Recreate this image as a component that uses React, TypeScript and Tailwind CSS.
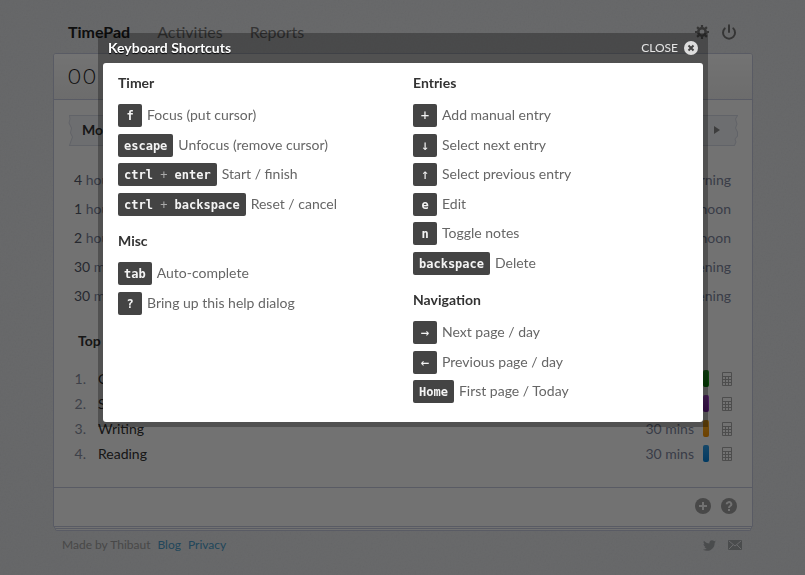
import { Power } from "lucide-react";
import { FaTwitter } from "react-icons/fa";

type Shortcut = { keys: string[]; label: string };
type Group = { title: string; items: Shortcut[] };

const left: Group[] = [
  {
    title: "Timer",
    items: [
      { keys: ["f"], label: "Focus (put cursor)" },
      { keys: ["escape"], label: "Unfocus (remove cursor)" },
      { keys: ["ctrl", "enter"], label: "Start / finish" },
      { keys: ["ctrl", "backspace"], label: "Reset / cancel" },
    ],
  },
  {
    title: "Misc",
    items: [
      { keys: ["tab"], label: "Auto-complete" },
      { keys: ["?"], label: "Bring up this help dialog" },
    ],
  },
];

const right: Group[] = [
  {
    title: "Entries",
    items: [
      { keys: ["+"], label: "Add manual entry" },
      { keys: ["↓"], label: "Select next entry" },
      { keys: ["↑"], label: "Select previous entry" },
      { keys: ["e"], label: "Edit" },
      { keys: ["n"], label: "Toggle notes" },
      { keys: ["backspace"], label: "Delete" },
    ],
  },
  {
    title: "Navigation",
    items: [
      { keys: ["→"], label: "Next page / day" },
      { keys: ["←"], label: "Previous page / day" },
      { keys: ["Home"], label: "First page / Today" },
    ],
  },
];

const entries = [
  { duration: "4", unit: "hours", when: "Morning" },
  { duration: "1", unit: "hour", when: "Afternoon" },
  { duration: "2", unit: "hours", when: "Afternoon" },
  { duration: "30", unit: "mins", when: "Evening" },
  { duration: "30", unit: "mins", when: "Evening" },
];

const activities = [
  { name: "Coding", time: "5 hours", color: "bg-linear-to-b from-[#28a428] to-[#009000]" },
  { name: "Study", time: "2 hours", color: "bg-linear-to-b from-[#b050d8] to-[#8a24b8]" },
  { name: "Writing", time: "30 mins", color: "bg-linear-to-b from-[#ffb020] to-[#f09000]" },
  { name: "Reading", time: "30 mins", color: "bg-linear-to-b from-[#2e9ee8] to-[#0080d8]" },
];

const symbols = ["+", "↓", "↑", "→", "←"];

function Groups({ groups }: { groups: Group[] }) {
  return (
    <div>
      {groups.map((g) => (
        <section key={g.title}>
          <h3 className="pb-0.5 text-sm leading-[38px] font-bold text-[#333]">{g.title}</h3>
          <ul>
            {g.items.map((s) => (
              <li key={s.label} className="flex items-start odd:h-[30px] even:h-[29px]">
                <kbd
                  className={
                    "mr-[5px] h-[23px] min-w-6 rounded-xs bg-[#444] px-1.5 text-center font-['DejaVu_Sans_Mono',monospace] leading-[21px] whitespace-pre text-[#f4f4f4] " +
                    (symbols.includes(s.keys[0]) ? "pt-px text-sm" : "pt-0.5 text-xs font-bold")
                  }
                >
                  {s.keys[0]}
                  {s.keys[1] && (
                    <>
                      <span className="font-normal text-[#aaa]"> + </span>
                      {s.keys[1]}
                    </>
                  )}
                </kbd>
                <span className="text-sm leading-[21px] text-[#666]">{s.label}</span>
              </li>
            ))}
          </ul>
        </section>
      ))}
    </div>
  );
}

function Gear() {
  return (
    <svg width="14" height="14" viewBox="0 0 14 14" fill="none" stroke="currentColor" aria-hidden="true">
      <circle cx="7" cy="7" r="3.700" strokeWidth="2.600" />
      <path
        strokeWidth="2.200"
        d="M7 0v2.500M7 11.500v2.500M0 7h2.500M11.500 7h2.500M2.100 2.100l1.800 1.800M10.100 10.100l1.800 1.800M2.100 11.900l1.800-1.800M10.100 3.900l1.800-1.800"
      />
    </svg>
  );
}

function Calculator() {
  return (
    <svg width="10" height="14" viewBox="0 0 10 14" aria-hidden="true">
      <path
        fill="#aaa"
        fillRule="evenodd"
        d="M1 0h8a1 1 0 0 1 1 1v12a1 1 0 0 1-1 1H1a1 1 0 0 1-1-1V1a1 1 0 0 1 1-1zM1 1v3h8V1zM1 5v2h2V5zM4 5v2h2V5zM7 5v2h2V5zM1 8v2h2V8zM4 8v2h2V8zM7 8v2h2V8zM1 11v2h2v-2zM4 11v2h2v-2zM7 11v2h2v-2z"
      />
    </svg>
  );
}

function Page() {
  return (
    <div className="relative isolate min-h-screen bg-radial from-[#f0f1f3] to-[#e4e6e9] pl-px">
      <svg className="absolute inset-0 -z-10 h-full w-full opacity-10" aria-hidden="true">
        <filter id="paper">
          <feTurbulence type="fractalNoise" baseFrequency="0.6" numOctaves="2" />
          <feColorMatrix type="saturate" values="0" />
        </filter>
        <rect width="100%" height="100%" filter="url(#paper)" />
      </svg>
      <div className="mx-auto max-w-[700px]">
        <header className="flex h-[53px] items-start justify-between pt-5 pr-4 pl-[15px]">
          <nav className="flex gap-[27px] text-base leading-6 text-[#777]">
            <a href="#timer" className="font-bold text-[#222]">TimePad</a>
            <a href="#activities">Activities</a>
            <a href="#reports">Reports</a>
          </nav>
          <div className="flex h-6 items-center gap-3 text-[#777]">
            <button type="button" aria-label="Settings"><Gear /></button>
            <button type="button" aria-label="Sign out"><Power size={16} strokeWidth={3} /></button>
          </div>
        </header>

        <main className="rounded-t-[3px] border border-[#c6cbdd] bg-[#fdfdfd]">
          <div className="flex h-[46px] items-center rounded-t-[2px] border-b border-[#c6cbdd] bg-linear-to-b from-white to-[#f0f0f0] px-3.5 pb-0.5">
            <span className="text-[22px] font-light tracking-widest text-[#222]">00 : 00 : 00</span>
          </div>

          <div className="flex h-[60px] items-center px-3.5 pt-px">
            <div className="relative flex h-[31px] w-full items-center justify-between pr-[18px] pb-0.5 pl-3.5 text-sm font-bold text-[#333]">
              <svg className="absolute inset-0 h-full w-full" viewBox="0 0 668 31" preserveAspectRatio="none" aria-hidden="true">
                <path
                  d="M1.500 .5H667.500L665.500 4L667 9L665.500 13L667.500 17L667.500 21L665 24L666 27L664.500 30.500H1.500L3 26L4.500 22L2.500 18L3.500 13L1 8L2 4Z"
                  fill="#f2f4f8"
                  stroke="#d8dce6"
                />
              </svg>
              <span className="relative">Monday</span>
              <button type="button" aria-label="Next day" className="relative">
                <svg width="6" height="8" viewBox="0 0 6 8"><path d="M0 0L6 4L0 8Z" fill="#888" /></svg>
              </button>
            </div>
          </div>

          <ul className="pt-[5px] pr-[21px] pb-px pl-5 text-sm leading-[29px] text-[#8088a0]">
            {entries.map((e, i) => (
              <li key={i} className="flex justify-between">
                <span><span className="text-[#555b6a]">{e.duration}</span> {e.unit}</span>
                <span>{e.when}</span>
              </li>
            ))}
          </ul>

          <h2 className="px-6 pt-5 text-sm leading-[20px] font-bold text-[#333]">Top activities</h2>
          <ol className="px-5 pt-[15px] pb-[21px] text-sm leading-[25px]">
            {activities.map((a, i) => (
              <li key={a.name} className="flex items-center">
                <span className="mr-3 w-3 text-right text-[#8a90a2]">{i + 1}.</span>
                <span className="flex-1 text-[#333]">{a.name}</span>
                <span className="text-[#8088a0]">{a.time}</span>
                <span className={"mr-[13px] ml-[9px] h-[17px] w-1.5 rounded-[2px] " + a.color} />
                <Calculator />
              </li>
            ))}
          </ol>

          <div className="flex h-[39px] items-center justify-end gap-2.5 border-t border-[#c6cbdd] px-[15px] pb-0.5">
            <button type="button" aria-label="Add entry">
              <svg width="16" height="16" viewBox="0 0 16 16">
                <circle cx="8" cy="8" r="8" fill="#a0a0a0" />
                <path d="M8 4v8M4 8h8" stroke="#fdfdfd" strokeWidth="2" />
              </svg>
            </button>
            <button type="button" aria-label="Help">
              <svg width="16" height="16" viewBox="0 0 16 16">
                <circle cx="8" cy="8" r="8" fill="#a0a0a0" />
                <path d="M5.700 6.300a2.300 2.100 0 1 1 3.500 1.700C8.400 8.500 8 8.800 8 9.900M8 11v2" fill="none" stroke="#fdfdfd" strokeWidth="2" />
              </svg>
            </button>
          </div>
        </main>
        <div className="mx-px h-0.5 rounded-b-[2px] border-x border-b border-[#c6cbdd] bg-[#fdfdfd]" />
        <div className="mx-0.5 h-0.5 rounded-b-[2px] border-x border-b border-[#c6cbdd] bg-[#fdfdfd]" />

        <footer className="flex h-7 items-center justify-between pr-[11px] pl-[9px] text-xs text-[#a0a0a0]">
          <p className="flex gap-[7px]">
            Made by Thibaut
            <a href="#blog" className="text-[#4a9cc9]">Blog</a>
            <a href="#privacy" className="text-[#4a9cc9]">Privacy</a>
          </p>
          <div className="flex items-center gap-3 text-[#a5a8ac]">
            <a href="#twitter" aria-label="Twitter"><FaTwitter size={13} /></a>
            <a href="#mail" aria-label="Email">
              <svg width="14" height="10" viewBox="0 0 14 10">
                <rect width="14" height="10" rx="1" fill="currentColor" />
                <path d="M1 1l6 5 6-5M1 9l4-4M13 9L9 5" fill="none" stroke="#e8ebee" />
              </svg>
            </a>
          </div>
        </footer>
      </div>
    </div>
  );
}

export default function App() {
  return (
    <div className="font-[Lato,sans-serif]">
      <Page />
      <div className="fixed inset-0 bg-black/55 pt-[33px] pl-px">
        <div role="dialog" aria-labelledby="title" className="mx-auto max-w-[610px] bg-black/30 px-[5px] pb-[5px]">
          <div className="flex h-[30px] items-center justify-between px-[5px] text-white">
            <h2 id="title" className="text-sm font-bold text-shadow-[0_1px_1px_#000]">Keyboard Shortcuts</h2>
            <button type="button" className="flex items-center gap-1.5 text-xs text-[#e4e4e4]">
              CLOSE
              <svg width="14" height="14" viewBox="0 0 14 14" aria-hidden="true">
                <circle cx="7" cy="7" r="7" fill="#ddd" />
                <path d="M4.500 4.500l5 5M9.500 4.500l-5 5" stroke="#444" strokeWidth="2" />
              </svg>
            </button>
          </div>
          <div className="grid grid-cols-2 gap-5 rounded-[3px] bg-white px-[15px] pt-px pb-3">
            <Groups groups={left} />
            <Groups groups={right} />
          </div>
        </div>
      </div>
    </div>
  );
}
